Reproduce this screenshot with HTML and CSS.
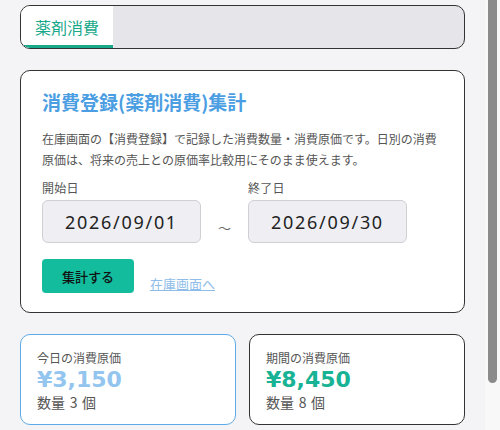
FILE: index.html
```html
<!DOCTYPE html>
<html lang="ja">
<head>
<meta charset="utf-8">
<title>消費登録集計</title>
<link rel="stylesheet" href="styles.css">
</head>
<body>
<div class="frame">
  <main class="page">
    <nav class="tabs">
      <div class="tab active">薬剤消費</div>
      <div class="tab-rest"></div>
    </nav>

    <section class="card">
      <h1 class="title">消費登録(薬剤消費)集計</h1>
      <p class="desc">在庫画面の【消費登録】で記録した消費数量・消費原価です。日別の消費原価は、将来の売上との原価率比較用にそのまま使えます。</p>
      <div class="range">
        <div class="field">
          <label class="label">開始日</label>
          <div class="date">2026/09/01</div>
        </div>
        <span class="tilde">～</span>
        <div class="field">
          <label class="label">終了日</label>
          <div class="date">2026/09/30</div>
        </div>
      </div>
      <div class="actions">
        <button class="btn">集計する</button>
        <a class="link" href="#">在庫画面へ</a>
      </div>
    </section>

    <div class="stats">
      <div class="stat today">
        <div class="stat-label">今日の消費原価</div>
        <div class="stat-value blue">¥3,150</div>
        <div class="stat-qty">数量 3 個</div>
      </div>
      <div class="stat period">
        <div class="stat-label">期間の消費原価</div>
        <div class="stat-value green">¥8,450</div>
        <div class="stat-qty">数量 8 個</div>
      </div>
    </div>
  </main>
  <div class="scrollbar"><div class="thumb"></div></div>
</div>
</body>
</html>
```

FILE: styles.css
```css
* { box-sizing: border-box; }
html, body {
  margin: 0;
  padding: 0;
  height: 430px;
  overflow: hidden;
  background: #f4f4f6;
  font-family: "Noto Sans CJK JP", "Noto Sans", sans-serif;
  color: #333;
}
.frame {
  display: flex;
  height: 430px;
}
.page {
  width: 485px;
  padding: 5px 20px 0 20px;
  display: flex;
  flex-direction: column;
  gap: 21px;
}
.scrollbar {
  width: 15px;
  background: #f8f8f9;
  padding: 0 3px 0 3px;
}
.thumb {
  width: 9px;
  height: 383px;
  background: #8b8b8b;
  border-radius: 0 0 5px 5px;
}

/* tabs */
.tabs {
  display: flex;
  height: 44px;
  border: 1px solid #333;
  border-radius: 10px;
  overflow: hidden;
  background: #e6e6ea;
}
.tab {
  width: 92px;
  padding-left: 14px;
  display: flex;
  align-items: center;
  font-size: 16px;
  color: #17a98a;
  background: #fff;
  border-bottom: 3px solid #17a98a;
  padding-top: 2px;
}
.tab-rest { flex: 1; }

/* main card */
.card {
  background: #fff;
  border: 1px solid #333;
  border-radius: 10px;
  padding: 19px 21px 19px 21px;
}
.title {
  margin: 0;
  font-size: 19px;
  line-height: 24px;
  font-weight: 700;
  color: #4b9ee2;
}
.desc {
  margin: 14px 0 0 0;
  font-size: 12px;
  line-height: 21px;
  color: #555;
}
.range {
  display: flex;
  align-items: flex-end;
  margin-top: 9px;
}
.field {
  display: flex;
  flex-direction: column;
}
.label {
  font-size: 12px;
  letter-spacing: 0.3px;
  line-height: 18px;
  color: #555;
  margin-bottom: 3px;
}
.date {
  width: 159px;
  height: 43px;
  background: #efeff3;
  border: 1px solid #cfcfd4;
  border-radius: 6px;
  display: flex;
  align-items: center;
  justify-content: center;
  font-family: "Noto Sans", sans-serif;
  font-size: 18px;
  letter-spacing: 1.7px;
  color: #222;
}
.tilde {
  width: 47px;
  text-align: center;
  font-size: 13px;
  color: #666;
  padding-bottom: 6px;
}
.actions {
  display: flex;
  align-items: flex-end;
  gap: 16px;
  margin-top: 16px;
}
.btn {
  width: 92px;
  height: 34px;
  border: none;
  border-radius: 4px;
  background: #12bc9c;
  color: #111;
  font-family: "Noto Sans CJK JP", sans-serif;
  font-size: 13px;
  font-weight: 500;
  padding: 0;
}
.link {
  font-size: 13px;
  color: #8fbde9;
  text-decoration: underline;
  line-height: 18px;
}

/* stats */
.stats {
  display: flex;
  gap: 13px;
}
.stat {
  flex: 1;
  height: 91px;
  background: #fff;
  border-radius: 10px;
  border: 1px solid #333;
  padding: 14px 16px 0 16px;
}
.stat.today { border-color: #5eaae8; }
.stat-label {
  font-size: 12px;
  line-height: 18px;
  color: #555;
}
.stat-value {
  font-family: "DejaVu Sans", sans-serif;
  font-size: 22px;
  font-weight: 700;
  line-height: 26px;
}
.stat-value.blue { color: #93c5ef; }
.stat-value.green { color: #17b394; }
.stat-qty {
  font-size: 14px;
  line-height: 18px;
  color: #555;
  word-spacing: 1.5px;
}
```
